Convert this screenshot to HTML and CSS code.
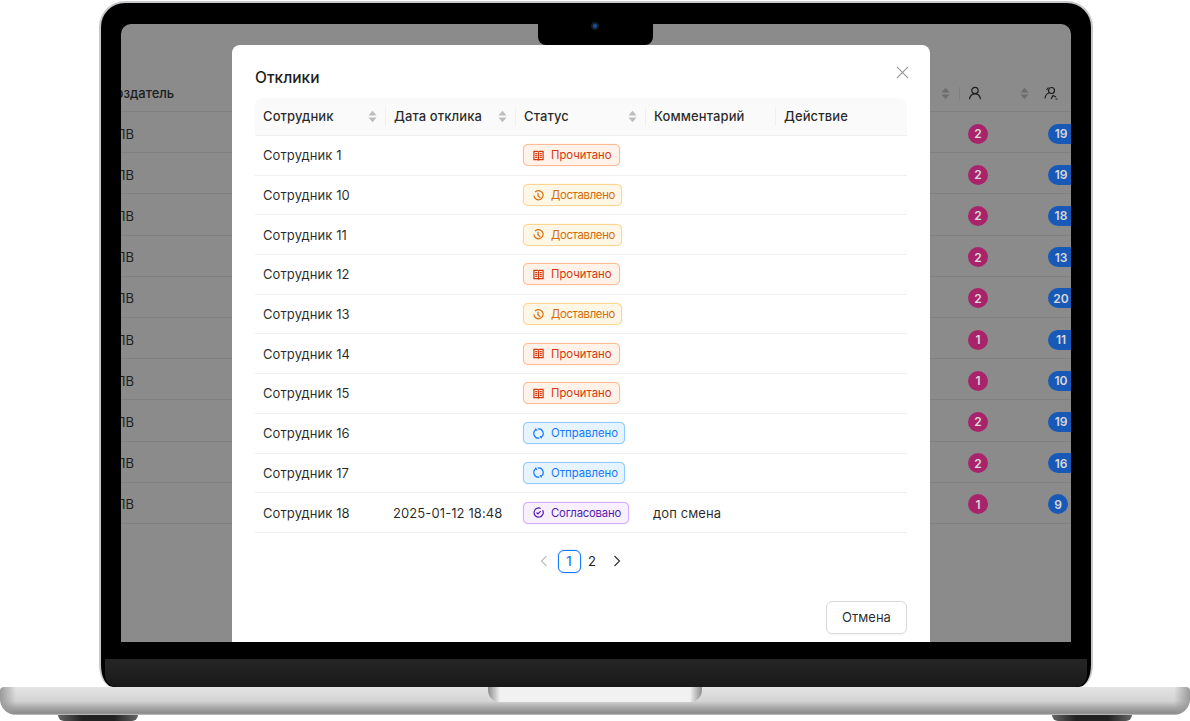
FILE: index.html
```html
<!DOCTYPE html>
<html lang="ru">

<head>
  <meta charset="UTF-8">
  <meta name="viewport" content="width=device-width, initial-scale=1">
  <title>Отклики</title>
  <link rel="stylesheet" href="styles.css">
</head>

<body>
  <svg class="defs" width="0" height="0">
    <symbol id="sort" viewBox="0 0 10 14">
      <path d="M5 0.5 9.5 6H0.5z" />
      <path d="M0.5 8H9.5L5 13.5z" />
    </symbol>
    <symbol id="read" viewBox="0 0 12 12">
      <path d="M1 1.500h4l1 .8 1-.8h4v9H7l-1 .6-1-.6H1zM6 2.300v8.200M2.400 4h2.200M2.400 6h2.200M2.400 8h2.200M7.400 4h2.200M7.400 6h2.200M7.400 8h2.200" />
    </symbol>
    <symbol id="clock" viewBox="0 0 12 12">
      <path d="M2.200 2.400A5 5 0 1 1 1 6M5.500 3v3.500l2.500 2" />
    </symbol>
    <symbol id="sync" viewBox="0 0 12 12">
      <path d="M7 10.900A5 5 0 0 1 3.400 1.700M2.600 .6 3.400 1.700 4.400 3M5 1.100A5 5 0 0 1 8.600 10.300M9.400 11.400 8.600 10.300 7.600 9" />
    </symbol>
    <symbol id="check" viewBox="0 0 12 12">
      <path d="M10.400 3.400A5 5 0 1 1 8.400 1.600M3.800 6 5.400 7.600 8.400 4.400" />
    </symbol>
  </svg>

  <div class="device">
    <div class="lid">
      <div class="screen">
        <div class="bg-head">
          <span class="bg-creator">Создатель</span>
          <span class="bg-cell bg-cell-sort"><svg class="sort-dim"><use href="#sort" /></svg></span>
          <span class="bg-cell">
            <svg class="head-icon" viewBox="0 0 14 14">
              <circle cx="7" cy="4.500" r="3.200" />
              <path d="M1.500 13.200c.4-3.400 2.600-5.400 5.500-5.400s5.100 2 5.500 5.400" />
            </svg>
            <svg class="sort-dim"><use href="#sort" /></svg>
          </span>
          <span class="bg-cell">
            <svg class="head-icon" viewBox="0 0 14 14">
              <circle cx="7.500" cy="4.500" r="3" />
              <path d="M4.500 1.500 2.500 4M1 12.500c.3-3 1.800-5 4-5.500M7 13l2-3.500 3 1.500M11.500 13h2" />
            </svg>
          </span>
        </div>
        <div class="bg-row"><span class="bg-creator">ЛЛВ</span><span></span><span class="bg-cell"><b class="dot">2</b></span><span class="bg-cell"><b class="pill">19</b></span></div>
        <div class="bg-row"><span class="bg-creator">ЛЛВ</span><span></span><span class="bg-cell"><b class="dot">2</b></span><span class="bg-cell"><b class="pill">19</b></span></div>
        <div class="bg-row"><span class="bg-creator">ЛЛВ</span><span></span><span class="bg-cell"><b class="dot">2</b></span><span class="bg-cell"><b class="pill">18</b></span></div>
        <div class="bg-row"><span class="bg-creator">ЛЛВ</span><span></span><span class="bg-cell"><b class="dot">2</b></span><span class="bg-cell"><b class="pill">13</b></span></div>
        <div class="bg-row"><span class="bg-creator">ЛЛВ</span><span></span><span class="bg-cell"><b class="dot">2</b></span><span class="bg-cell"><b class="pill">20</b></span></div>
        <div class="bg-row"><span class="bg-creator">ЛЛВ</span><span></span><span class="bg-cell"><b class="dot">1</b></span><span class="bg-cell"><b class="pill">11</b></span></div>
        <div class="bg-row"><span class="bg-creator">ЛЛВ</span><span></span><span class="bg-cell"><b class="dot">1</b></span><span class="bg-cell"><b class="pill">10</b></span></div>
        <div class="bg-row"><span class="bg-creator">ЛЛВ</span><span></span><span class="bg-cell"><b class="dot">2</b></span><span class="bg-cell"><b class="pill">19</b></span></div>
        <div class="bg-row"><span class="bg-creator">ЛЛВ</span><span></span><span class="bg-cell"><b class="dot">2</b></span><span class="bg-cell"><b class="pill">16</b></span></div>
        <div class="bg-row"><span class="bg-creator">ЛЛВ</span><span></span><span class="bg-cell"><b class="dot">1</b></span><span class="bg-cell"><b class="pill pill-one">9</b></span></div>

        <div class="modal">
          <svg class="close" viewBox="0 0 14 14"><path d="M1 1 13 13M13 1 1 13" /></svg>
          <h2 class="modal-title">Отклики</h2>

          <div class="table">
            <div class="row row-head">
              <div class="cell">Сотрудник<svg class="sort"><use href="#sort" /></svg></div>
              <div class="cell">Дата отклика<svg class="sort"><use href="#sort" /></svg></div>
              <div class="cell">Статус<svg class="sort"><use href="#sort" /></svg></div>
              <div class="cell">Комментарий</div>
              <div class="cell">Действие</div>
            </div>
            <div class="row"><div class="cell">Сотрудник 1</div><div class="cell"></div><div class="cell"><span class="tag tag-read"><svg><use href="#read" /></svg>Прочитано</span></div><div class="cell"></div><div class="cell"></div></div>
            <div class="row"><div class="cell">Сотрудник 10</div><div class="cell"></div><div class="cell"><span class="tag tag-delivered"><svg><use href="#clock" /></svg>Доставлено</span></div><div class="cell"></div><div class="cell"></div></div>
            <div class="row"><div class="cell">Сотрудник 11</div><div class="cell"></div><div class="cell"><span class="tag tag-delivered"><svg><use href="#clock" /></svg>Доставлено</span></div><div class="cell"></div><div class="cell"></div></div>
            <div class="row"><div class="cell">Сотрудник 12</div><div class="cell"></div><div class="cell"><span class="tag tag-read"><svg><use href="#read" /></svg>Прочитано</span></div><div class="cell"></div><div class="cell"></div></div>
            <div class="row"><div class="cell">Сотрудник 13</div><div class="cell"></div><div class="cell"><span class="tag tag-delivered"><svg><use href="#clock" /></svg>Доставлено</span></div><div class="cell"></div><div class="cell"></div></div>
            <div class="row"><div class="cell">Сотрудник 14</div><div class="cell"></div><div class="cell"><span class="tag tag-read"><svg><use href="#read" /></svg>Прочитано</span></div><div class="cell"></div><div class="cell"></div></div>
            <div class="row"><div class="cell">Сотрудник 15</div><div class="cell"></div><div class="cell"><span class="tag tag-read"><svg><use href="#read" /></svg>Прочитано</span></div><div class="cell"></div><div class="cell"></div></div>
            <div class="row"><div class="cell">Сотрудник 16</div><div class="cell"></div><div class="cell"><span class="tag tag-sent"><svg><use href="#sync" /></svg>Отправлено</span></div><div class="cell"></div><div class="cell"></div></div>
            <div class="row"><div class="cell">Сотрудник 17</div><div class="cell"></div><div class="cell"><span class="tag tag-sent"><svg><use href="#sync" /></svg>Отправлено</span></div><div class="cell"></div><div class="cell"></div></div>
            <div class="row"><div class="cell">Сотрудник 18</div><div class="cell">2025-01-12 18:48</div><div class="cell"><span class="tag tag-agreed"><svg><use href="#check" /></svg>Согласовано</span></div><div class="cell">доп смена</div><div class="cell"></div></div>
          </div>

          <div class="pager">
            <svg class="chev chev-off" viewBox="0 0 8 12"><path d="M6.500 1 1.500 6l5 5" /></svg>
            <span class="page page-active">1</span>
            <span class="page">2</span>
            <svg class="chev chev-next" viewBox="0 0 8 12"><path d="M1.500 1l5 5-5 5" /></svg>
          </div>

          <div class="modal-foot"><button class="btn">Отмена</button></div>
        </div>
      </div>
      <div class="camera"><i></i></div>
      <div class="strip"></div>
    </div>
    <div class="base"><div class="base-notch"></div></div>
    <div class="feet"><i></i><i></i></div>
  </div>
</body>

</html>
```

FILE: styles.css
```css
* {
  box-sizing: border-box;
}

body {
  margin: 0;
  background: #fff;
  font-family: Inter, "Noto Sans", Arial, sans-serif;
  overflow: hidden;
}

.defs {
  position: absolute;
}

.device {
  width: 1190px;
  height: 721px;
  padding-top: 1px;
  overflow: hidden;
}

/* lid */
.lid {
  position: relative;
  width: 994px;
  height: 686px;
  margin-left: 99px;
  padding: 21px 20px 0;
  background: #000;
  border: 2px solid #c8c8cd;
  border-bottom: 0;
  border-radius: 26px 26px 14px 14px / 26px 26px 22px 22px;
}

.screen {
  position: relative;
  height: 618px;
  padding-top: 51px;
  background: #8b8b8b;
  border-radius: 10px 10px 0 0;
  overflow: hidden;
  color: #1d1d1d;
  font-size: 13px;
}

.camera {
  position: absolute;
  top: 21px;
  left: 437px;
  width: 115px;
  height: 21px;
  display: flex;
  justify-content: center;
  background: #000;
  border-radius: 0 0 8px 8px;
}

.camera i {
  width: 8px;
  height: 8px;
  margin-top: -2px;
  margin-right: 2px;
  border-radius: 50%;
  background: radial-gradient(#1c4f96 25%, #14202e 45%, #0c1118 100%);
}

.strip {
  height: 28px;
  margin: 17px -16px 0;
  background: linear-gradient(#262626, #181818);
  border-radius: 0 0 12px 12px;
}

.base {
  position: relative;
  height: 28px;
  background:
    linear-gradient(90deg, #9a9a9a, rgba(200, 200, 200, 0) 16px, rgba(200, 200, 200, 0) 1174px, #9a9a9a),
    linear-gradient(#e4e4e4, #d4d4d4 50%, #a8a8a8 74%, #8b8b8b 94%, #c8c8c8);
  border-radius: 4px 4px 16px 16px;
}

.base-notch {
  width: 214px;
  height: 15px;
  margin-left: 488px;
  background: linear-gradient(90deg, #8c8c8c, #f1f1f1 12px, #f1f1f1 202px, #8c8c8c);
  border-radius: 0 0 12px 12px;
}

.feet {
  display: flex;
  justify-content: space-between;
  padding: 0 58px;
}

.feet i {
  width: 80px;
  height: 6px;
  background: linear-gradient(90deg, #666, #222 30%, #222 70%, #666);
  border-radius: 0 0 20px 20px;
}

/* page behind the modal */
.bg-head,
.bg-row {
  display: grid;
  grid-template-columns: 780px 59px 76px 35px;
  align-items: center;
  border-bottom: 1px solid #808080;
}

.bg-head {
  height: 37px;
  font-weight: 500;
  font-size: 13px;
}

.bg-row {
  height: 41.200px;
  padding-top: 3px;
}

.bg-creator {
  margin-left: -15px;
}

.bg-cell {
  display: flex;
  align-items: center;
  justify-content: space-between;
  padding: 0 7px 0 8px;
}

.bg-cell-sort {
  justify-content: flex-end;
  padding-right: 9px;
  border-right: 1px solid #808080;
}

.sort-dim {
  width: 9px;
  height: 13px;
  fill: #6d6d6d;
}

.head-icon {
  width: 14px;
  height: 14px;
  fill: none;
  stroke: #1d1d1d;
  stroke-width: 1.200;
}

.dot,
.pill {
  display: flex;
  align-items: center;
  justify-content: center;
  flex: none;
  height: 20px;
  color: #d8d8d8;
  font-size: 12px;
  font-weight: 600;
}

.dot {
  width: 20px;
  background: #a9236b;
  border-radius: 50%;
}

.pill {
  width: 32px;
  padding-right: 6px;
  margin-left: 4px;
  background: #1859b8;
  border-radius: 10px;
}

.pill-one {
  width: 20px;
  padding-right: 0;
}

/* modal */
.modal {
  position: absolute;
  top: 21px;
  left: 111px;
  width: 698px;
  height: 640px;
  padding: 21px 23px 0;
  background: #fff;
  border-radius: 8px;
}

.close {
  position: absolute;
  top: 21px;
  left: 664px;
  width: 13px;
  height: 13px;
  fill: none;
  stroke: #9a9a9a;
  stroke-width: 1.300;
}

.modal-title {
  margin: 0 0 8px;
  font-size: 15.500px;
  font-weight: 500;
  line-height: 24px;
}

.table {
  width: 652px;
}

.row {
  display: grid;
  grid-template-columns: repeat(5, 130px);
  height: 39.700px;
  border-bottom: 1px solid #f0f0f0;
}

.row-head {
  height: 38px;
  padding-bottom: 1px;
  background: #fafafa;
  border-radius: 8px 8px 0 0;
  font-weight: 500;
}

.cell {
  position: relative;
  display: flex;
  align-items: center;
  justify-content: space-between;
  padding: 0 8px;
  color: rgba(0, 0, 0, .85);
  letter-spacing: .1px;
}

.row-head .cell + .cell {
  padding-left: 9px;
}

.row-head .cell + .cell::before {
  content: "";
  position: absolute;
  left: 0;
  top: 9px;
  height: 19px;
  border-left: 1px solid #f0f0f0;
}

.sort {
  width: 9px;
  height: 13px;
  fill: #bdbdbd;
}

.tag {
  display: inline-flex;
  align-items: center;
  gap: 7px;
  height: 22px;
  padding: 0 6px 0 9px;
  border: 1px solid;
  border-radius: 5px;
  font-size: 11.300px;
  letter-spacing: 0;
  white-space: nowrap;
}

.tag svg {
  width: 11px;
  height: 11px;
  fill: none;
  stroke: currentColor;
  stroke-width: 1.300;
}

.tag-read {
  padding-right: 8px;
  background: #fff2e8;
  border-color: #ffbb96;
  box-shadow: 0 0 1px #ffbb96;
  color: #d4380d;
}

.tag-delivered {
  background: #fff7e6;
  border-color: #ffd591;
  box-shadow: 0 0 1px #ffd591;
  color: #d46b08;
  letter-spacing: -.3px;
}

.tag-sent {
  background: #e6f4ff;
  border-color: #91caff;
  box-shadow: 0 0 1px #91caff;
  color: #1677ff;
}

.tag-agreed {
  padding-right: 7px;
  background: #f9f0ff;
  border-color: #d3adf7;
  box-shadow: 0 0 1px #d3adf7;
  color: #531dab;
  letter-spacing: -.2px;
}

.pager {
  display: flex;
  align-items: center;
  justify-content: center;
  margin-top: 17px;
  padding-right: 2px;
}

.page {
  display: flex;
  align-items: center;
  justify-content: center;
  width: 23px;
  height: 23px;
  border-radius: 6px;
}

.page-active {
  border: 1px solid #1677ff;
  box-shadow: 0 0 1px #1677ff;
  color: #1677ff;
  font-weight: 500;
}

.chev {
  width: 8px;
  height: 12px;
  fill: none;
  stroke: #333;
  stroke-width: 1.200;
}

.chev-off {
  margin-right: 10px;
  stroke: #bfbfbf;
}

.chev-next {
  margin-left: 9px;
}

.modal-foot {
  display: flex;
  justify-content: flex-end;
  margin-top: 28px;
}

.btn {
  width: 81px;
  height: 33px;
  background: #fff;
  border: 1px solid #d9d9d9;
  border-radius: 6px;
  box-shadow: 0 2px 0 rgba(0, 0, 0, .02);
  color: rgba(0, 0, 0, .85);
  font: inherit;
}
```
